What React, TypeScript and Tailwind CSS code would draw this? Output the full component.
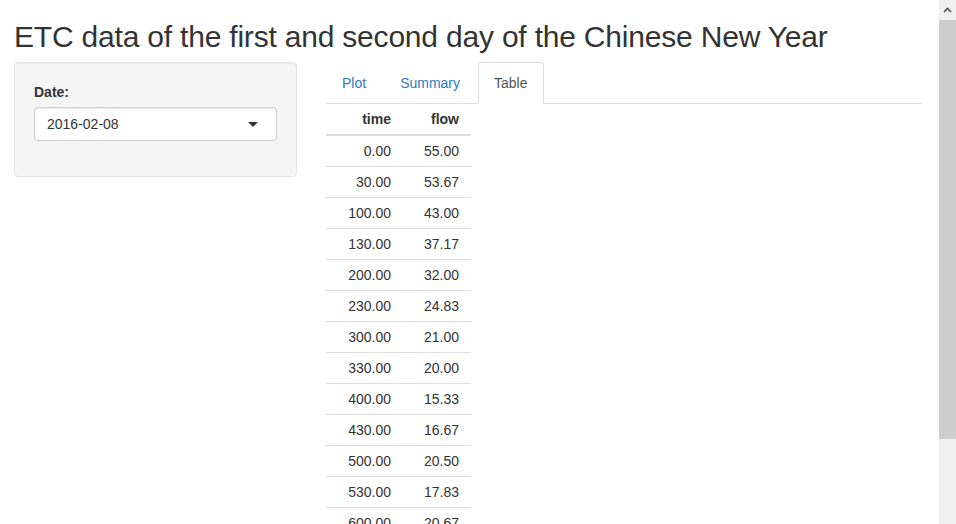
import React from "react";

const rows: [string, string][] = [
  ["0.00", "55.00"],
  ["30.00", "53.67"],
  ["100.00", "43.00"],
  ["130.00", "37.17"],
  ["200.00", "32.00"],
  ["230.00", "24.83"],
  ["300.00", "21.00"],
  ["330.00", "20.00"],
  ["400.00", "15.33"],
  ["430.00", "16.67"],
  ["500.00", "20.50"],
  ["530.00", "17.83"],
  ["600.00", "20.67"],
  ["630.00", "22.17"],
];

export default function App() {
  return (
    <div
      className="flex h-[524px] w-[956px] overflow-hidden bg-white text-[14px] leading-[20px] text-[#333]"
      style={{ fontFamily: '"Liberation Sans", Arial, sans-serif' }}
    >
      <div className="flex-1 pl-[14px] pr-[17px]">
        <h2 className="mt-[20px] mb-[9px] text-[30px] leading-[33px] font-normal tracking-[-0.2px] text-[#333]">
          ETC data of the first and second day of the Chinese New Year
        </h2>
        <div className="flex items-start">
          <div className="w-[283px] rounded-[4px] border border-[#e3e3e3] bg-[#f5f5f5] p-[19px] pb-[20px] shadow-[inset_0_1px_1px_rgba(0,0,0,0.05)]">
            <label className="block font-bold">Date:</label>
            <div className="mt-[5px] mb-[15px] flex h-[34px] items-center justify-between rounded-[4px] border border-[#ccc] bg-white pl-[12px] pr-[18px] shadow-[inset_0_1px_1px_rgba(0,0,0,0.075)]">
              <span>2016-02-08</span>
              <span className="h-0 w-0 border-x-[5px] border-t-[5px] border-x-transparent border-t-[#333]" />
            </div>
          </div>
          <div className="ml-[29px] flex-1">
            <ul className="flex border-b border-[#ddd]">
              <li className="mr-[2px] -mb-px">
                <span className="block rounded-t-[4px] border border-transparent px-[15px] py-[10px] text-[#337ab7]">Plot</span>
              </li>
              <li className="mr-[2px] -mb-px">
                <span className="block rounded-t-[4px] border border-transparent px-[15px] py-[10px] text-[#337ab7]">Summary</span>
              </li>
              <li className="mr-[2px] -mb-px">
                <span className="block rounded-t-[4px] border border-[#ddd] border-b-white bg-white px-[15px] py-[10px] text-[#555]">Table</span>
              </li>
            </ul>
            <table className="border-collapse">
              <thead>
                <tr>
                  <th className="w-[73px] border-b-2 border-[#ddd] py-[5px] pr-[8px] text-right font-bold">time</th>
                  <th className="w-[72px] border-b-2 border-[#ddd] py-[5px] pr-[12px] text-right font-bold">flow</th>
                </tr>
              </thead>
              <tbody>
                {rows.map(([t, f]) => (
                  <tr key={t}>
                    <td className="border-b border-[#ddd] py-[5px] pr-[8px] text-right">{t}</td>
                    <td className="border-b border-[#ddd] py-[5px] pr-[12px] text-right">{f}</td>
                  </tr>
                ))}
              </tbody>
            </table>
          </div>
        </div>
      </div>
      <div className="flex w-[17px] flex-col bg-[#f0f0f0]">
        <div className="flex h-[20px] items-center justify-center">
          <svg width="9" height="6" viewBox="0 0 9 6">
            <path d="M1 5 L4.5 1.5 L8 5" fill="none" stroke="#505050" strokeWidth="1.6" />
          </svg>
        </div>
        <div className="h-[419px] bg-[#cdcdcd]" />
      </div>
    </div>
  );
}
